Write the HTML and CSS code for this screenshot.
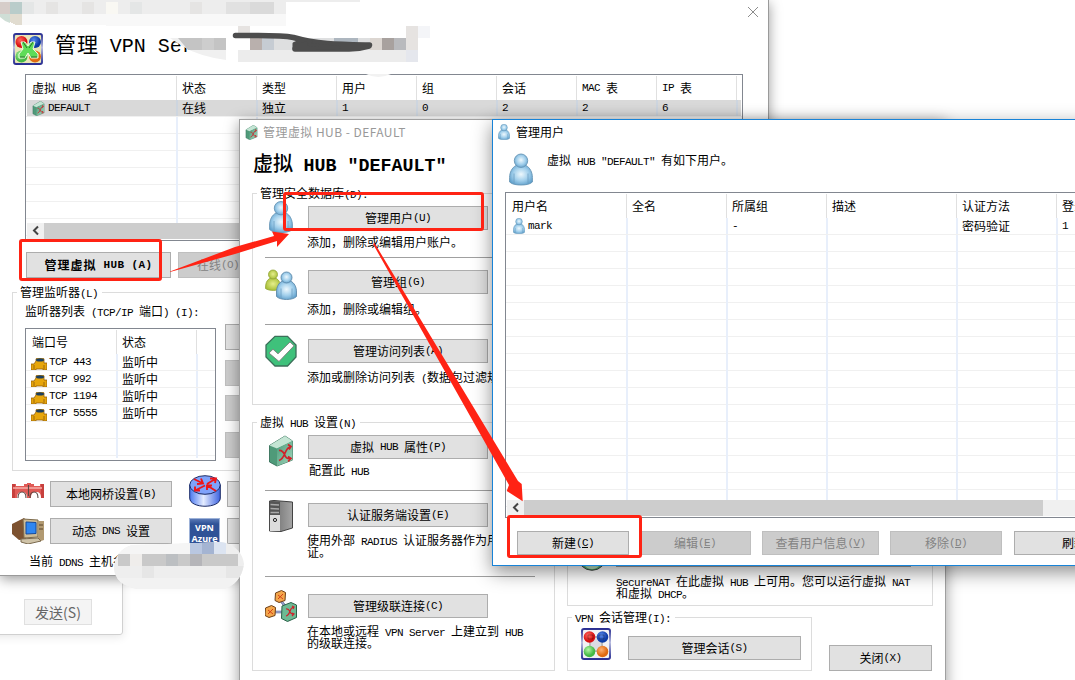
FILE: index.html
```html
<!DOCTYPE html>
<html lang="zh-CN">
<head>
<meta charset="utf-8">
<title>管理用户</title>
<link rel="stylesheet" href="styles.css">
</head>
<body>
<svg class="defs" width="0" height="0">
  <defs>
    <radialGradient id="gb" cx=".5" cy=".45" r=".6"><stop offset="0" stop-color="#eef8fd"/><stop offset=".55" stop-color="#a3d0ec"/><stop offset="1" stop-color="#5f9fcb"/></radialGradient>
    <radialGradient id="gg" cx=".5" cy=".45" r=".6"><stop offset="0" stop-color="#e6ee8c"/><stop offset="1" stop-color="#a3bb2f"/></radialGradient>
    <linearGradient id="hubf" x1="0" y1="0" x2="1" y2="1"><stop offset="0" stop-color="#4a9a78"/><stop offset="1" stop-color="#a6d8bf"/></linearGradient>
    <linearGradient id="frame" x1="0" y1="0" x2="0" y2="1"><stop offset="0" stop-color="#2a2f92"/><stop offset=".45" stop-color="#b9bde0"/><stop offset="1" stop-color="#2a2f92"/></linearGradient>
    <linearGradient id="rt" x1="0" y1="0" x2="1" y2="0"><stop offset="0" stop-color="#4a78f0"/><stop offset=".45" stop-color="#e4ecff"/><stop offset="1" stop-color="#3c62e0"/></linearGradient>
    <linearGradient id="srv" x1="0" y1="0" x2="1" y2="0"><stop offset="0" stop-color="#666"/><stop offset="1" stop-color="#a5a5a5"/></linearGradient>
    <radialGradient id="br" cx=".4" cy=".35"><stop offset="0" stop-color="#ff6a60"/><stop offset="1" stop-color="#d80f10"/></radialGradient>
    <radialGradient id="bb" cx=".4" cy=".35"><stop offset="0" stop-color="#5a8cf0"/><stop offset="1" stop-color="#0d3ba5"/></radialGradient>
    <radialGradient id="bg" cx=".4" cy=".35"><stop offset="0" stop-color="#b4f5a5"/><stop offset="1" stop-color="#45b945"/></radialGradient>
    <radialGradient id="bo" cx=".4" cy=".35"><stop offset="0" stop-color="#ffb070"/><stop offset="1" stop-color="#e06a10"/></radialGradient>
    <symbol id="man" viewBox="0 0 24 32">
      <path d="M7 12C3 14 .6 19 .6 24v4.500C3 31 8 31.500 12 31.500S21 31 23.400 28.500V24c0-5-2.400-10-6.400-12z" fill="url(#gb)" stroke="#6795b5" stroke-width=".9"/>
      <circle cx="12" cy="7.200" r="6.700" fill="url(#gb)" stroke="#6795b5" stroke-width=".9"/>
      <path d="M5 20v10M19 20v10" stroke="#6c9ec2" stroke-width=".8"/>
    </symbol>
    <symbol id="men" viewBox="0 0 32 31">
      <path d="M4.500 9C1.500 11 .5 14 .5 19c3 2.500 13 2.500 15 0 0-5-1-8-4-10z" fill="url(#gg)" stroke="#93a536" stroke-width=".8"/>
      <circle cx="8" cy="5" r="4.500" fill="url(#gg)" stroke="#93a536" stroke-width=".8"/>
      <path d="M17.500 11.500c-4 2-6 6-6 11V27c4 4 16 4 20 0v-4.500c0-5-2-9-6-11z" fill="url(#gb)" stroke="#5f8aaa" stroke-width=".9"/>
      <circle cx="21.500" cy="8" r="5.500" fill="url(#gb)" stroke="#5f8aaa" stroke-width=".9"/>
      <path d="M16 19v10M27 19v10" stroke="#6c9ec2" stroke-width=".8"/>
    </symbol>
    <symbol id="hub" viewBox="0 0 24 31">
      <path d="M.5 10 16 .5l7.500 5v19L8 30.500l-7.500-4z" fill="#4f9a79" stroke="#37705a" stroke-width=".9"/>
      <path d="M.5 10 16 .5l7.500 5L8 13z" fill="#c4e5d4"/>
      <path d="M8 13 23.500 5.500v19L8 30.500z" fill="url(#hubf)"/>
      <path d="M10 15c7-1 4 10 12 8M10 25c7-2 5-13 12-14m-3-2 3 2-2 3m-1 7 3 2-3 3" fill="none" stroke="#d0212a" stroke-width="1.700"/>
    </symbol>
    <symbol id="check" viewBox="0 0 32 31">
      <path d="M10 .8h12.500L31 9.500v12L22.500 30.500H10L1 21.500v-12z" fill="#3fc17b" stroke="#3c6f5a" stroke-width="1.300"/>
      <path d="m4 17.500 4-3.800 5 4.600L25 6.500l4 3.800L14 26z" fill="#fff" stroke="#7d7d7d" stroke-width=".9"/>
    </symbol>
    <symbol id="server" viewBox="0 0 24 32">
      <path d="M.5 1 5 .5 23.500 2v26L12 31.500.5 31z" fill="url(#srv)" stroke="#333" stroke-width=".9"/>
      <path d="M.5 1 11 2v29.500L.5 31z" fill="#555"/>
      <path d="M1 15h10v16H1z" fill="#dcdcdc"/>
      <path d="M1.500 4.500 10 5M1.500 8.500l8.500.5M1.500 12.500H10" stroke="#a9a9a9" stroke-width="1.300"/>
      <circle cx="6" cy="20" r="1.600" fill="none" stroke="#222"/>
    </symbol>
    <symbol id="cascade" viewBox="0 0 32 32">
      <path d="m15 10 6 7M10 22h8" stroke="#566093" stroke-width="2.600"/><path d="m15 10 6 7M10 22h8" stroke="#c5cdf0"/>
      <path d="m10.500 3 6-2.500 4 2-.5 8-6 2-4-2z" fill="#f3a64a" stroke="#6d3f17"/>
      <path d="m.5 18 6-2.500 4 2-.5 8-6 2-4-2z" fill="#f3a64a" stroke="#6d3f17"/>
      <path d="m17 16 9-3.500 5.500 2.500v12.500l-9 4-6-3z" fill="#6dba94" stroke="#2b6048"/>
      <path d="m13 5 5 4m0-5-5 5M3 20l5 4m0-5-5 5" stroke="#d3421b" fill="none"/>
      <path d="m21 19c5-1 3 7 8 5m-8 2c5-1 3-9 8-9m-2-1 2 1-1 2m-1 4 2 1-2 2" fill="none" stroke="#d0212a" stroke-width="1.200"/>
    </symbol>
    <symbol id="balls" viewBox="0 0 30 32">
      <rect x="1" y="1" width="28" height="30" rx="2" fill="#f2f2f4" stroke="url(#frame)" stroke-width="2"/>
      <path d="M9 9h12v14H9z" fill="#dcdce2" stroke="#bbb" stroke-width="2"/>
      <circle cx="8.500" cy="9" r="5.800" fill="url(#br)"/><circle cx="21.500" cy="9" r="5.800" fill="url(#bb)"/>
      <circle cx="8.500" cy="23.500" r="5.800" fill="url(#bg)"/><circle cx="21.500" cy="23.500" r="5.800" fill="url(#bo)"/>
      <path d="M7 7h5v4H7zM18 7h5v4h-5z" fill="none" stroke="#000" stroke-opacity=".3"/>
    </symbol>
    <symbol id="manager" viewBox="0 0 30 32">
      <rect x="1" y="1" width="28" height="30" rx="2" fill="#e9e6b8" stroke="url(#frame)" stroke-width="2"/>
      <circle cx="8.500" cy="9" r="6" fill="url(#br)"/><circle cx="22" cy="9" r="6" fill="url(#bb)"/>
      <circle cx="8.500" cy="23.500" r="6" fill="url(#bg)"/><circle cx="22" cy="23.500" r="6" fill="url(#bo)"/>
      <path d="m8 9 4 0 3 4 3-4 4 0-2 7 5 5v4h-7l-3-5-3 5H6v-4l4-5z" fill="#5fdc58" stroke="#eafbe0"/>
      <path d="m10 9 4 6m6-6-4 6M7 24h5m6 0h6" stroke="#26702a" fill="none"/>
    </symbol>
    <symbol id="bridge" viewBox="0 0 32 16">
      <path d="M0 1h4v2h8V1h3V0h4v1h3v2h6V1h4v14h-3c0-5-2-6-5-6s-5 1-5 6h-4c0-5-2-6-5-6s-5 1-5 6H0z" fill="#e05a56"/>
      <path d="M0 1h3v14H0zM29 1h3v14h-3z" fill="#c7403d"/><path d="M1 5h29" stroke="#f7b0aa" stroke-width="1.500"/>
      <path d="M6 15c0-4 1.500-6 4-6s4 2 4 6M18 15c0-4 1.500-6 4-6s4 2 4 6M16.500 2v11" fill="none" stroke="#5b4743" stroke-width="1.100"/>
    </symbol>
    <symbol id="router" viewBox="0 0 32 32">
      <path d="M.7 10v13c0 11 30.600 11 30.600 0V10z" fill="url(#rt)" stroke="#1b2b66"/>
      <ellipse cx="16" cy="10" rx="15.300" ry="9.300" fill="#7fa2fb" stroke="#1b2b66"/>
      <path d="m5 4 9 4.500m-6 .5 6-.5-2-5M27 3.500 18 9m3-5.500 6 0-1 4.500M6 15.500l10-5m-10 1v4h5M27 16l-8-5m-1 4v-4.500l5 0" fill="none" stroke="#ee1518" stroke-width="1.900"/>
    </symbol>
    <symbol id="pc" viewBox="0 0 32 26">
      <path d="m0 6 12-6 2 2v19L7 22 0 16z" fill="#7d5230"/><path d="m11 1 15 1v17l-14 1z" fill="#cdbb96" stroke="#7d6b4c"/>
      <path d="m14 4 10 .5v11L14 16z" fill="#2f86f0" stroke="#164a9c"/>
      <path d="M26 3h6v19l-6 2z" fill="#b29a72"/><path d="M27 7h4m-4 4h4" stroke="#5a452b"/>
      <path d="m9 21 17-1 3 3-13 3-7-2z" fill="#cfc3a8" stroke="#7b6a4f"/>
    </symbol>
    <symbol id="port" viewBox="0 0 16 12">
      <path d="M0 6h3l2-3V1c0-1.500 8-1.500 8 0v4h3v7h-4v-1H5v1H0z" fill="#e7a60c" stroke="#94600a" stroke-width=".8"/>
      <ellipse cx="9" cy="1.900" rx="4" ry="1.700" fill="#1d3f60"/><path d="M3 7v4m10-4v4" stroke="#9c690c"/>
    </symbol>
    <symbol id="chev" viewBox="0 0 17 15"><path d="m11 3.500-4 4 4 4" fill="none" stroke="#444" stroke-width="2"/></symbol>
  </defs>
</svg>

<main class="desktop">
  <section class="send-panel"><button class="send">发送(S)</button></section>

  <section class="win win-server">
    <header class="server-head">
      <svg class="i-manager"><use href="#manager"/></svg>
      <h1>管理 <span>VPN Ser</span></h1>
    </header>
    <svg class="close" viewBox="0 0 12 12"><path d="m1 1 10 10M11 1 1 11" stroke="#8c8c8c"/></svg>

    <div class="list hubs">
      <div class="tr th"><div>虚拟 <s>HUB</s> 名</div><div>状态</div><div>类型</div><div>用户</div><div>组</div><div>会话</div><div><s>MAC</s> 表</div><div><s>IP</s> 表</div></div>
      <div class="tr selected"><div><svg class="i-row"><use href="#hub"/></svg><s>DEFAULT</s></div><div>在线</div><div>独立</div><div><s>1</s></div><div><s>0</s></div><div><s>2</s></div><div><s>2</s></div><div><s>6</s></div></div>
      <div class="scroll"><svg><use href="#chev"/></svg><i></i></div>
    </div>

    <div class="hub-actions"><button class="strong">管理虚拟 <s>HUB (A)</s></button><button disabled>在线<s>(O)</s></button></div>

    <div class="group listeners">
      <div class="legend">管理监听器<s>(L)</s></div>
      <p>监听器列表 <s>(TCP/IP </s>端口<s>) (I):</s></p>
      <div class="listener-body">
        <div class="list ports">
          <div class="tr th"><div>端口号</div><div>状态</div></div>
          <div class="tr"><div><svg class="i-port"><use href="#port"/></svg><s>TCP 443</s></div><div>监听中</div></div>
          <div class="tr"><div><svg class="i-port"><use href="#port"/></svg><s>TCP 992</s></div><div>监听中</div></div>
          <div class="tr"><div><svg class="i-port"><use href="#port"/></svg><s>TCP 1194</s></div><div>监听中</div></div>
          <div class="tr"><div><svg class="i-port"><use href="#port"/></svg><s>TCP 5555</s></div><div>监听中</div></div>
        </div>
        <div class="side"><button></button><button disabled></button><button disabled></button><button disabled></button></div>
      </div>
    </div>

    <div class="tools">
      <svg class="i-bridge"><use href="#bridge"/></svg><button>本地网桥设置<s>(B)</s></button><svg class="i-router"><use href="#router"/></svg><button></button>
      <svg class="i-pc"><use href="#pc"/></svg><button>动态 <s>DNS</s> 设置</button><div class="azure">VPN<br>Azure</div><button></button>
    </div>
    <p class="ddns">当前 <s>DDNS</s> 主机名</p>
  </section>

  <section class="win win-hub">
    <header class="bar"><svg class="i-bar-hub"><use href="#hub"/></svg>管理虚拟 HUB - DEFAULT</header>
    <h2>虚拟 <span>HUB "DEFAULT"</span></h2>
    <div class="hub-cols">
      <div class="hub-left">
        <div class="group g-db">
          <div class="legend">管理安全数据库<s>(D):</s></div>
          <div class="feature f1"><svg class="i-man"><use href="#man"/></svg><div><button>管理用户<s>(U)</s></button><p>添加，删除或编辑用户账户。</p></div></div>
          <div class="feature f2"><svg class="i-wide"><use href="#men"/></svg><div><button>管理组<s>(G)</s></button><p>添加，删除或编辑组。</p></div></div>
          <div class="feature f3"><svg class="i-wide"><use href="#check"/></svg><div><button>管理访问列表<s>(A)</s></button><p>添加或删除访问列表 <s>(</s>数据包过滤规则<s>)</s></p></div></div>
        </div>
        <div class="group g-set">
          <div class="legend">虚拟 <s>HUB</s> 设置<s>(N)</s></div>
          <div class="feature f4"><svg class="i-man"><use href="#hub"/></svg><div><button>虚拟 <s>HUB</s> 属性<s>(P)</s></button><p>配置此 <s>HUB</s></p></div></div>
          <div class="feature f5"><svg class="i-man"><use href="#server"/></svg><div><button>认证服务端设置<s>(E)</s></button><p>使用外部 <s>RADIUS</s> 认证服务器作为用户认<br>证。</p></div></div>
          <div class="feature f6"><svg class="i-wide"><use href="#cascade"/></svg><div><button>管理级联连接<s>(C)</s></button><p>在本地或远程 <s>VPN Server</s> 上建立到 <s>HUB</s><br>的级联连接。</p></div></div>
        </div>
      </div>
      <div class="hub-right">
        <div class="group g-nat">
          <svg class="i-nat" viewBox="0 0 30 30"><circle cx="15" cy="15" r="14.300" fill="#58b878" stroke="#444"/><ellipse cx="15" cy="24" rx="7" ry="4" fill="#bfe8c6"/></svg>
          <p><s>SecureNAT</s> 在此虚拟 <s>HUB</s> 上可用。您可以运行虚拟 <s>NAT</s><br>和虚拟 <s>DHCP</s>。</p>
        </div>
        <div class="hub-foot">
          <div class="group g-sess">
            <div class="legend"><s>VPN </s>会话管理<s>(I):</s></div>
            <div class="sess"><svg class="i-balls"><use href="#balls"/></svg><button>管理会话<s>(S)</s></button></div>
          </div>
          <button class="exit">关闭<s>(X)</s></button>
        </div>
      </div>
    </div>
  </section>

  <section class="win win-users">
    <header class="bar"><svg class="i-bar-man"><use href="#man"/></svg>管理用户</header>
    <div class="users-intro"><svg class="i-big"><use href="#man"/></svg><p>虚拟 <s>HUB "DEFAULT" </s>有如下用户。</p></div>
    <div class="list users">
      <div class="tr th"><div>用户名</div><div>全名</div><div>所属组</div><div>描述</div><div>认证方法</div><div>登录</div></div>
      <div class="tr"><div><svg class="i-rowman"><use href="#man"/></svg><s>mark</s></div><div></div><div><s>-</s></div><div></div><div>密码验证</div><div><s>1</s></div></div>
      <div class="scroll"><svg><use href="#chev"/></svg><i></i></div>
    </div>
    <div class="user-actions"><button>新建<s>(<u>C</u>)</s></button><button disabled>编辑<s>(<u>E</u>)</s></button><button disabled>查看用户信息<s>(<u>V</u>)</s></button><button disabled>移除<s>(<u>D</u>)</s></button><button>刷新</button></div>
  </section>

  <svg class="marks" viewBox="0 0 1075 680">
    <g shape-rendering="crispEdges">
      <path d="M0 0h360v2H0z" fill="#ededed"/>
      <path d="M0 2h10v12H0z" fill="#d6cdc9"/><path d="M10 2h12v12H10z" fill="#b9ccca"/><path d="M10 14h12v11H16l-6-3z" fill="#e1dcd0"/>
      <path d="M22 2h264v12H22z" fill="#ededed"/><path d="M22 14h264v12H106V25H22z" fill="#f8f8f8"/>
      <path d="M22 2h12v12H22zM130 2h12v12h-12z" fill="#e4e6e6"/><path d="M46 2h12v12H46zM82 2h12v12H82zM190 2h12v12h-12z" fill="#e5e4e3"/><path d="M106 2h12v12h-12z" fill="#f9f8f3"/><path d="M226 2h24v12h-24z" fill="#e1e1e1"/><path d="M250 2h24v12h-24z" fill="#dadada"/>
    </g>
    <path d="M0 14h10v9Q4 21 0 17z" fill="#cfded6"/>
    <path d="M170 38h56v22q-28-4-44-14z" fill="#f0f0f0"/>
    <path d="M178 38h48v12h-38z" fill="#c4c4c4"/><path d="M202 38h12v12h-12z" fill="#cdcdcd"/>
    <g shape-rendering="crispEdges">
      <path d="M238 26h12v12h-12zM406 26h12v24h-12z" fill="#e6e3e1"/><path d="M418 26h12v12h-12z" fill="#f4f5f8"/>
      <path d="M238 50h168v12H238z" fill="#ececec"/><path d="M250 38h12v12h-12z" fill="#b9b0ad"/><path d="M262 38h12v12h-12z" fill="#c6ccd3"/><path d="M274 38h96v12h-96z" fill="#dedfe0"/><path d="M334 38h24v12h-24z" fill="#adb6bf"/>
      <path d="M370 38h12v12h-12z" fill="#dcd6d1"/><path d="M382 38h12v12h-12z" fill="#a8a19e"/><path d="M394 38h12v12h-12z" fill="#b9babd"/><path d="M406 50h12v12h-12z" fill="#e5e7ed"/>
    </g>
    <path d="M235.500 35.500c20 .5 42-1 58 2 24 7 46 7 76 7.500M369 46q-10 3-20 3h-54" fill="none" stroke="#4d4d4d" stroke-width="5.500" stroke-linecap="round"/>
    <path d="M294 43.500q8-4 14-3l3 1-2 3 30 3-26 1h-19z" fill="#4d4d4d" stroke="#4d4d4d" stroke-width="3" stroke-linejoin="round"/>
    <path d="M366 74q12 6 25 0z" fill="#f2f2f2"/>

    <clipPath id="blob"><path d="M114 568c0-11 7-20 18-23q50-1 84-3c16-1 27 10 28 22-2 14-10 22-20 25h-86c-14-2-24-10-24-21z"/></clipPath>
    <g clip-path="url(#blob)"><path d="M110 540h140v52H110z" fill="#eee"/><path d="M110 542h80v12h-80z" fill="#f5f5f5"/><path d="M190 540h12v14h-12z" fill="#b9c7e1"/><path d="M202 540h12v14h-12z" fill="#a4b4d2"/><path d="M214 540h12v14h-12z" fill="#dce4f1"/>
      <path d="M118 554h120v12H118z" fill="#c9c9c9"/><path d="M130 554h12v12h-12z" fill="#efedeb"/><path d="M166 554h12v12h-12z" fill="#bcbfc2"/><path d="M190 554h12v12h-12z" fill="#b5b5b9"/><path d="M142 566h12v12h-12zM226 566h18v12h-18z" fill="#e6e6e6"/><path d="M110 578h140v14H110z" fill="#f2f2f2"/></g>

    <g fill="none" stroke="#ff2314" stroke-width="3"><rect x="20.500" y="240.500" width="140" height="39" rx="1.500"/><rect x="284.500" y="193.500" width="198" height="36" rx="1.500"/><rect x="508.500" y="516.500" width="132" height="40" rx="1.500"/></g>
    <path d="M170 271.500 235 247l39-11-2-4.500 17 2.500-12 13v-6l-42 13-65 18z" fill="#ff2314"/>
    <path d="m373 244 1.500-1 143.500 238 3.700 3 1 17.300-16-10.300 2.300-6z" fill="#ff2314"/>
  </svg>
</main>
</body>
</html>
```
FILE: styles.css
```css
* { box-sizing: border-box; margin: 0; padding: 0; }
body { width: 1075px; height: 680px; overflow: hidden; background: #fff; color: #000; font: 12px/12px "Noto Sans CJK SC", sans-serif; word-spacing: 3.3px; }
svg { display: block; flex: none; }
.defs { position: absolute; }
.desktop { position: relative; width: 1075px; height: 680px; overflow: hidden; }

/* half-width latin runs: 6px per character */
s { font: 11px/0 "Liberation Mono", monospace; letter-spacing: -.6px; word-spacing: 0; text-decoration: none; white-space: pre; }
u { text-underline-offset: 1px; }
p { white-space: nowrap; }

button { display: flex; align-items: center; justify-content: center; flex: none; height: 24px; border: 1px solid #adadad; background: #e1e1e1; color: #000; font: inherit; word-spacing: inherit; white-space: pre; }
button:disabled { background: #ccc; border-color: #bfbfbf; color: #838383; }

.win { position: absolute; display: flex; flex-direction: column; background: #fff; }
.win-server { left: 0; top: 0; width: 769px; height: 576px; border: solid #9a9a9a; border-width: 0 1px 1px 0; box-shadow: 0 3px 12px rgba(0,0,0,.4); overflow: hidden; }
.win-hub { left: 239px; top: 119px; width: 707px; height: 580px; border: 1px solid #a0a0a0; box-shadow: 0 3px 14px rgba(0,0,0,.4); }
.win-users { left: 492px; top: 119px; width: 700px; height: 447px; border: 1px solid #1883d7; box-shadow: 0 6px 18px rgba(0,0,0,.45); }
.marks { position: absolute; left: 0; top: 0; width: 1075px; height: 680px; pointer-events: none; }

.send-panel { position: absolute; left: -10px; top: 560px; width: 133px; height: 75px; padding: 38px 0 0 34px; border: 1px solid #d0d0d0; border-radius: 3px; box-shadow: 0 2px 10px rgba(0,0,0,.1); }
.send { width: 68px; height: 26px; margin-left: -1px; background: #f4f4f4; border-color: #e0e0e0; color: #666; font-size: 14px; }

/* list views */
.list { position: relative; display: flex; flex-direction: column; border: 1px solid #828790; overflow: hidden; }
.tr { display: grid; height: 17px; flex: none; margin: 0 1px; border-bottom: 1px solid #f0f0f0; }
.tr > div { display: flex; align-items: center; padding-left: 4px; white-space: pre; border-right: 2px solid #e8effb; }
.tr > div:first-child { padding-left: 5px; }
.tr.th { height: 25px; padding-top: 1px; border: 0; }
.tr.th > div { border-right: 1px solid #e0e0e0; margin-right: 1px; }
.tr.selected { background: #d9d9d9; }
.tr.selected > div { border-color: #cdd5df; }
.scroll { display: flex; height: 16px; margin: auto 1px 1px; background: #f0f0f0; }
.scroll svg { width: 17px; height: 15px; }
.scroll i { background: #cdcdcd; flex: 1; }
.hubs { width: 718px; height: 167px; margin: 8px 0 0 25px; --line: linear-gradient(#e8effb,#e8effb);
  background: var(--line) 150px 25px/2px 124px no-repeat, var(--line) 230px 25px/2px 124px no-repeat, repeating-linear-gradient(transparent 0 16px, #f0f0f0 16px 17px) 0 25px no-repeat; }
.hubs .tr { grid-template-columns: 151px repeat(7, 80px) 1fr; }
.ports { width: 191px; height: 133px; --line: linear-gradient(#e8effb,#e8effb);
  background: var(--line) 90px 25px/2px 104px no-repeat, var(--line) 170px 25px/2px 104px no-repeat, repeating-linear-gradient(transparent 0 16px, #f0f0f0 16px 17px) 0 25px no-repeat; }
.ports .tr { grid-template-columns: 91px 80px 1fr; }
.users { width: 640px; height: 326px; margin: 5px 0 0 12px; --line: linear-gradient(#e8effb,#e8effb);
  background: var(--line) 120px 25px/2px 284px no-repeat, var(--line) 220px 25px/2px 284px no-repeat, var(--line) 320px 25px/2px 284px no-repeat, var(--line) 450px 25px/2px 284px no-repeat, var(--line) 550px 25px/2px 284px no-repeat, repeating-linear-gradient(transparent 0 16px, #f0f0f0 16px 17px) 0 25px no-repeat; }
.users .tr { grid-template-columns: 121px 100px 100px 130px 100px 1fr; }
.users .scroll i { flex: 0 0 519px; }
.i-row { width: 13px; height: 15px; margin-right: 3px; }
.i-port { width: 16px; height: 12px; margin: 4px 2px 0 -1px; }
.i-rowman { width: 12px; height: 16px; margin: 0 3px 0 1px; }

.group { display: flex; flex-direction: column; border: 1px solid #dcdcdc; }
.legend { align-self: flex-start; height: 12px; margin: -7px 0 0 4px; padding: 0 4px 0 3px; background: #fff; white-space: pre; }

/* server window */
.server-head { display: flex; height: 66px; padding: 33px 0 0 13px; }
.i-manager { width: 30px; height: 32px; }
.server-head h1 { margin: 0 0 0 12px; font-size: 21px; line-height: 20px; font-weight: 400; letter-spacing: 1px; word-spacing: 5px; white-space: nowrap; }
.server-head h1 span { font: 20px/0 "Liberation Mono", monospace; letter-spacing: 0; word-spacing: 0; }
.close { position: absolute; left: 747px; top: 6px; width: 12px; height: 12px; }
.hub-actions { display: flex; gap: 7px; margin: 11px 0 0 26px; }
.hub-actions button { width: 80px; height: 26px; }
.hub-actions .strong { width: 145px; font-weight: 700; letter-spacing: 1px; }
.hub-actions .strong s { font-weight: 700; letter-spacing: .4px; }
.listeners { width: 500px; height: 179px; margin: 14px 0 0 12px; }
.listeners p { margin: 7px 0 0 12px; }
.listener-body { display: flex; gap: 9px; margin: 11px 0 0 12px; }
.side { display: flex; flex-direction: column; margin-top: -4px; }
.side button { width: 80px; height: 26px; margin-bottom: 10px; }
.side button:nth-child(2) { margin-bottom: 9px; }
.side button:nth-child(3) { margin-bottom: 11px; }
.tools { display: grid; grid-template-columns: 38px 122px 55px 80px; grid-template-rows: 37px 37px; margin: 10px 0 0 12px; }
.tools button { height: 26px; }
.i-bridge { width: 32px; height: 16px; margin-top: 2px; }
.i-router { width: 32px; height: 32px; margin: -6px 0 0 17px; }
.i-pc { width: 32px; height: 26px; }
.azure { width: 31px; height: 31px; margin-left: 17px; padding-top: 3px; background: linear-gradient(#5878b5, #2f5297 5px); border: 1px solid #9db2d8; color: #fff; text-align: center; font: bold 9px/11px "Open Sans", sans-serif; }
.ddns { margin-left: 29px; }

/* hub window */
.bar { display: flex; align-items: center; height: 24px; padding-left: 5px; }
.win-hub .bar { color: #999; word-spacing: 0; letter-spacing: .45px; }
.i-bar-hub { width: 13px; height: 15px; margin-right: 5px; }
.win-hub h2 { height: 20px; margin: 9px 0 0 13px; font-size: 20px; line-height: 20px; font-weight: 500; word-spacing: 6px; white-space: nowrap; }
.win-hub h2 span { font: bold 18.330px/0 "Liberation Mono", monospace; word-spacing: 0; }
.hub-cols { display: flex; gap: 12px; margin: 20px 0 0 12px; }
.hub-left { width: 303px; flex: none; }
.g-db { height: 212px; }
.g-set { height: 249px; margin-top: 17px; }
.feature { display: grid; grid-template-columns: 43px 1fr; flex: none; width: 270px; margin-left: 12px; border-bottom: 1px solid #a0a0a0; }
.feature button { width: 180px; }
.feature p { margin-left: -1px; }
.i-man { width: 24px; height: 32px; margin-left: 4px; }
.i-wide { width: 32px; height: 32px; }
.f1 { height: 59px; }
.f1 button { margin-top: 7px; } .f1 p { margin-top: 6px; } .f1 .i-man { margin-top: 2px; }
.f2 { height: 67px; padding-top: 11px; }
.f2 button { margin-top: 1px; } .f2 p { margin-top: 9px; }
.f3 { height: 78px; padding-top: 10px; border: 0; }
.f3 button { margin-top: 4px; } .f3 p { margin-top: 8px; }
.f4 { height: 63px; padding-top: 7px; }
.f4 p { margin: 5px 0 0 1px; }
.f5 { height: 86px; padding-top: 9px; }
.f5 button { margin-top: 3px; } .f5 p { margin-top: 7px; }
.f6 { height: 90px; padding-top: 13px; border: 0; }
.f6 button { margin-top: 4px; } .f6 p { margin-top: 7px; }
.hub-right { padding-top: 307px; }
.g-nat { display: flex; flex-direction: row; width: 366px; height: 106px; padding: 40px 0 0 9px; }
.g-nat p { width: 295px; height: 40px; margin: 25px 0 0 9px; padding-top: 8px; border-top: 1px solid #a0a0a0; }
.i-nat { width: 30px; height: 30px; }
.hub-foot { display: flex; align-items: flex-end; gap: 17px; margin-top: 11px; }
.g-sess { width: 245px; height: 54px; }
.sess { display: flex; gap: 17px; padding: 5px 0 0 13px; }
.i-balls { width: 30px; height: 32px; }
.sess button { width: 173px; margin-top: 8px; }
.exit { width: 103px; height: 26px; }

/* users window */
.i-bar-man { width: 12px; height: 16px; margin-right: 6px; }
.users-intro { display: flex; gap: 14px; height: 43px; padding: 9px 0 0 16px; }
.users-intro p { padding-top: 1px; }
.i-big { width: 24px; height: 33px; }
.user-actions { display: flex; gap: 11px; margin: 13px 0 0 24px; }
.user-actions button { width: 112px; }
.user-actions button:nth-child(2) { margin-left: -1px; }
.user-actions button:nth-child(3) { width: 117px; }
.user-actions button:last-child { width: 120px; margin-left: 1px; }
```
